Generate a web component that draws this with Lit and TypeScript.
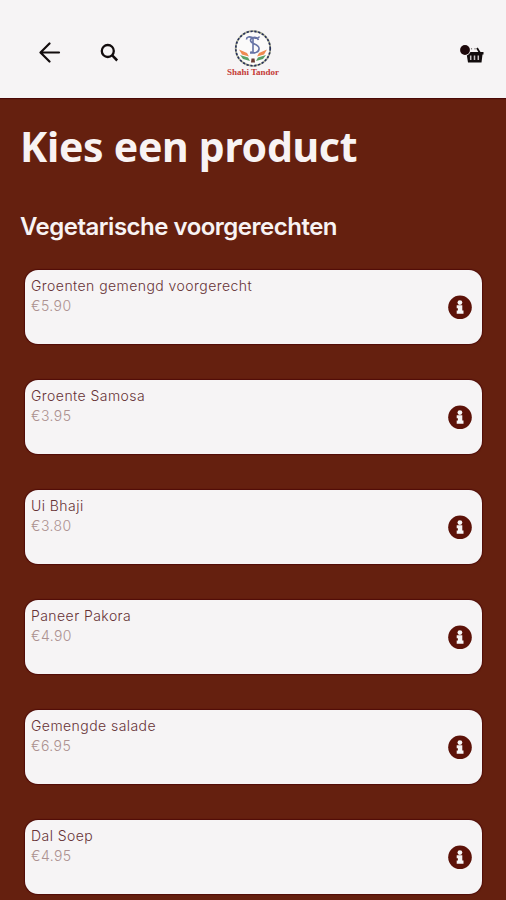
import { LitElement, html, css, svg } from "lit";
import { customElement, property } from "lit/decorators.js";

interface Product {
  name: string;
  price: string;
}

const PRODUCTS: Product[] = [
  { name: "Groenten gemengd voorgerecht", price: "€5.90" },
  { name: "Groente Samosa", price: "€3.95" },
  { name: "Ui Bhaji", price: "€3.80" },
  { name: "Paneer Pakora", price: "€4.90" },
  { name: "Gemengde salade", price: "€6.95" },
  { name: "Dal Soep", price: "€4.95" },
];

@customElement("product-card")
export class ProductCard extends LitElement {
  @property() name = "";
  @property() price = "";

  static styles = css`
    :host {
      display: flex;
      align-items: center;
      justify-content: space-between;
      box-sizing: border-box;
      height: 74px;
      padding: 0 10px 0 6px;
      border-radius: 13px;
      background: #f6f4f5;
      box-shadow: 0 0 1px 1px #500c08;
      font-family: Inter, "Liberation Sans", sans-serif;
    }
    .text {
      align-self: flex-start;
      padding-top: 6px;
      font-size: 14px;
      font-weight: 300;
      line-height: 20px;
      white-space: nowrap;
    }
    .name {
      color: #663235;
      letter-spacing: 0.44px;
    }
    .price {
      color: #ac9190;
      letter-spacing: 0.45px;
    }
    .info {
      display: block;
      width: 25px;
      height: 25px;
    }
  `;

  render() {
    return html`
      <div class="text">
        <div class="name">${this.name}</div>
        <div class="price">${this.price}</div>
      </div>
      <svg class="info" viewBox="0 0 25 25">
        <circle cx="13" cy="12.300" r="11.8" fill="#5c1208" />
        <circle cx="12.900" cy="7.600" r="2.400" fill="#f6f4f5" />
        <path d="M9.700 10.200h5.600v5.400h1.200v3.100H9.700v-3.100h1.200v-2.400H9.700z" fill="#f6f4f5" />
      </svg>
    `;
  }
}

@customElement("app-root")
export class AppRoot extends LitElement {
  static styles = css`
    :host {
      display: block;
      height: 900px;
      overflow: hidden;
      background: #65200f;
    }
    .bar {
      display: grid;
      grid-template-columns: 1fr auto 1fr;
      align-items: center;
      box-sizing: border-box;
      height: 98px;
      padding: 7px 22px 0 38px;
      background: #f6f4f5;
      box-shadow: 0 1px 1px #4a0907;
    }
    .nav {
      display: flex;
      align-items: center;
      gap: 39px;
    }
    .nav svg,
    .basket,
    .logo {
      display: block;
    }
    .logo {
      margin-right: 16px;
    }
    .basket {
      justify-self: end;
    }
    h1,
    h2 {
      margin: 0;
      color: #f8f3f3;
      white-space: nowrap;
    }
    h1 {
      padding: 20px 0 0 20px;
      font: 700 41px/56px "Noto Sans", sans-serif;
      letter-spacing: -0.3px;
    }
    h2 {
      padding: 37px 0 0 20px;
      font: 600 24px/32px Inter, sans-serif;
      letter-spacing: -0.5px;
    }
    .list {
      display: grid;
      gap: 36.1px;
      padding: 27px 24px 0 25px;
    }
  `;

  private emblem() {
    return svg`
      <circle cx="28" cy="21.500" r="17.300" fill="#fbfafa" stroke="#a9ad92" stroke-width="1.800" />
      <circle cx="28" cy="21.500" r="17.200" fill="none" stroke="#27305c" stroke-width="1.600" stroke-dasharray="2.200 1.700" />
      <path d="M14 22.500l8 3.500 2 3.500-7-2z" fill="#ee8a50" />
      <path d="M42 22.500l-8 3.500-2 3.500 7-2z" fill="#ee8a50" />
      <path d="M15 28l8 2.500 2 3.500-7-2z" fill="#59a066" />
      <path d="M41 28l-8 2.500-2 3.500 7-2z" fill="#59a066" />
      <path d="M21.500 12.500c0-3 3-3 6-2s6 1 7-1M28 11v14.500M25 26h5M33.500 13c-2-4-8-3-8 .5s8 3.500 8.500 7.500-5 6.500-8.500 3.500" fill="none" stroke="#6673a5" stroke-width="1.600" />
      <path d="M26.500 31.500h3l.5 4h-4z" fill="#6b3a30" />
      <text x="2" y="47.500" textLength="52" lengthAdjust="spacingAndGlyphs"
        font-family="Liberation Serif, serif" font-weight="700" font-size="7.500" fill="#c43b35">Shahi Tandor</text>
    `;
  }

  render() {
    return html`
      <header class="bar">
        <div class="nav">
          <svg width="23" height="22" viewBox="0 0 23 22" fill="none" stroke="#120c0d" stroke-width="2.2" stroke-linecap="round" stroke-linejoin="round">
            <path d="M11.500 1.500L2.500 10.500l9 9M3 10.500h18" />
          </svg>
          <svg width="20" height="22" viewBox="0 0 20 22" fill="none" stroke="#120c0d">
            <circle cx="7.800" cy="9" r="6" stroke-width="2.300" />
            <path d="M12 13.200l5.200 5.300" stroke-width="2.500" />
          </svg>
        </div>
        <svg class="logo" width="56" height="52" viewBox="0 0 56 52">${this.emblem()}</svg>
        <svg class="basket" width="26" height="20" viewBox="0 0 26 20">
          <path d="M8.500 9h17v2.500h-1l-1 8H10l-1.300-8z" fill="#120c0d" />
          <path d="M12.700 12.500v4.500M16.500 12.500v4.500M20.300 12.500v4.500" stroke="#c5c0c2" stroke-width="1.500" />
          <path d="M19 5l3 5" stroke="#120c0d" stroke-width="1.800" />
          <path d="M13.500 5v1.500M17 5v1.500" stroke="#8d8788" stroke-width="1.200" />
          <circle cx="7" cy="7" r="5.800" fill="#f6f4f5" />
          <circle cx="7" cy="7" r="4.900" fill="#1d080b" />
        </svg>
      </header>
      <h1>Kies een product</h1>
      <h2>Vegetarische voorgerechten</h2>
      <main class="list">
        ${PRODUCTS.map((p) => html`<product-card .name=${p.name} .price=${p.price}></product-card>`)}
      </main>
    `;
  }
}
